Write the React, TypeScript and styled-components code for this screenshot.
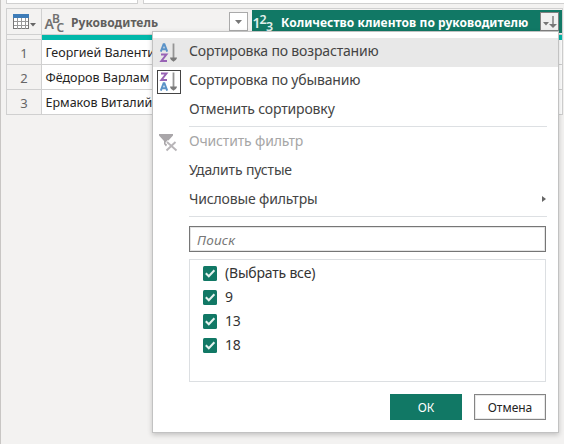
import React from "react";
import styled, { createGlobalStyle } from "styled-components";

const GlobalStyle = createGlobalStyle`
  * { box-sizing: border-box; }
  body {
    margin: 0;
    overflow: hidden;
    background: #f3f2f1;
    font-family: "Noto Sans", sans-serif;
    color: #333;
  }
`;

const Page = styled.main`
  position: relative;
  width: 564px;
  height: 444px;
  overflow: hidden;
  border-left: 1px solid #c8c6c4;
`;

const FormulaBar = styled.div`
  display: flex;
  gap: 5px;
  height: 4px;
  padding-left: 5px;
`;

const FormulaField = styled.div<{ $wide?: boolean }>`
  flex: ${(p) => (p.$wide ? "1" : "0 0 132px")};
  height: 4px;
  background: #fff;
  border: solid #d0d0d0;
  border-width: ${(p) => (p.$wide ? "0 0 1px 1px" : "0 1px 1px 1px")};
`;

const Grid = styled.section`
  width: 557px;
  margin: 4px 0 0 5px;
  border: 1px solid #d0d0d0;
`;

const HeaderRow = styled.header`
  display: grid;
  grid-template-columns: 35px 210px 1fr;
  height: 26px;
  border-bottom: 1px solid #d0d0d0;
`;

const CornerCell = styled.div`
  display: flex;
  align-items: center;
  padding-left: 6px;
  border-right: 1px solid #d0d0d0;
`;

const ColumnHeader = styled.div<{ $selected?: boolean }>`
  display: flex;
  align-items: center;
  height: ${(p) => (p.$selected ? "23px" : "25px")};
  margin-top: ${(p) => (p.$selected ? "1px" : "0")};
  padding-left: ${(p) => (p.$selected ? "1px" : "2px")};
  background: ${(p) => (p.$selected ? "#117865" : "transparent")};
  color: ${(p) => (p.$selected ? "#fff" : "#605e5c")};
`;

const ColumnTitle = styled.span<{ $track: number; $gap: number }>`
  flex: 1;
  margin-left: ${(p) => p.$gap}px;
  padding-top: 2px;
  font-size: 12px;
  line-height: 20px;
  font-weight: 700;
  letter-spacing: ${(p) => p.$track}px;
  white-space: nowrap;
`;

const FilterButton = styled.button<{ $active?: boolean }>`
  display: flex;
  align-items: center;
  justify-content: center;
  width: 19px;
  height: 19px;
  flex: none;
  padding: 0;
  margin-right: ${(p) => (p.$active ? "3px" : "4px")};
  border: 1px solid ${(p) => (p.$active ? "#808080" : "#aaa")};
  background: ${(p) => (p.$active ? "#f0f0f0" : "#fff")};
`;

const QualityRow = styled.div`
  display: grid;
  grid-template-columns: 35px 1fr;
  height: 5px;
`;

const QualityBlank = styled.div`
  border-right: 1px solid #d0d0d0;
  border-bottom: 1px solid #d0d0d0;
`;

const QualityBar = styled.div`
  background: #01b8aa;
`;

const DataRow = styled.div`
  display: grid;
  grid-template-columns: 35px 1fr;
  height: 25px;
  border-bottom: 1px solid #d0d0d0;
  &:last-child { height: 24px; border-bottom: 0; }
`;

const RowNumber = styled.div`
  border-right: 1px solid #d0d0d0;
  text-align: center;
  font-size: 13px;
  line-height: 26px;
  height: 24px;
  color: #666;
`;

const NameCell = styled.div`
  height: 24px;
  padding-left: 3.5px;
  background: #fff;
  font-size: 12.5px;
  line-height: 25px;
  white-space: nowrap;
  color: #252423;
`;

const Menu = styled.div`
  position: absolute;
  top: 31px;
  left: 151px;
  width: 407px;
  height: 402px;
  padding-top: 6px;
  border: 1px solid #c2c2c2;
  background: #fff;
  box-shadow: 0 2px 5px rgba(0, 0, 0, 0.2);
`;

const MenuItem = styled.div<{ $hover?: boolean; $disabled?: boolean }>`
  display: flex;
  align-items: center;
  height: 29px;
  padding-right: 12px;
  background: ${(p) => (p.$hover ? "#e8e8e8" : "transparent")};
  color: ${(p) => (p.$disabled ? "#a6a6a6" : "#444")};
  font-size: 14px;
  letter-spacing: -0.16px;
  white-space: nowrap;
`;

const IconSlot = styled.span<{ $boxed?: boolean }>`
  display: flex;
  align-items: center;
  justify-content: center;
  width: 24px;
  height: 24px;
  margin: 0 8px 0 4px;
  flex: none;
  border: 1px solid ${(p) => (p.$boxed ? "#444" : "transparent")};
  background: ${(p) => (p.$boxed ? "#fff" : "transparent")};
`;

const ItemLabel = styled.span<{ $lift?: number }>`
  flex: 1;
  padding-bottom: ${(p) => p.$lift ?? 3}px;
  line-height: 20px;
`;

const SubmenuArrow = styled.span`
  padding-bottom: 2px;
`;

const Separator = styled.div<{ $top: number }>`
  height: 1px;
  margin: ${(p) => p.$top}px 11px 0 36px;
  background: #dde0e3;
`;

const SearchInput = styled.input`
  display: block;
  width: 357px;
  height: 26px;
  margin: 9px 0 0 36px;
  padding: 1px 7px 0;
  border: 1px solid #767676;
  border-radius: 0;
  background: #fff;
  box-shadow: inset 0 0 0 1px #e4e4e4;
  font: italic 13.5px "Noto Sans", sans-serif;
  letter-spacing: 0.2px;
  &::placeholder { color: #777; opacity: 1; }
`;

const ValueList = styled.div`
  width: 357px;
  height: 123px;
  margin: 7px 0 0 36px;
  padding: 1px 0 0 13px;
  border: 1px solid #dcdfe2;
`;

const ValueRow = styled.label`
  display: flex;
  align-items: center;
  gap: 8px;
  height: 24px;
  font-size: 14px;
  line-height: 20px;
  letter-spacing: -0.2px;
  color: #333;
`;

const Actions = styled.footer`
  display: flex;
  justify-content: flex-end;
  gap: 12px;
  margin: 12px 12px 0 0;
`;

const ActionButton = styled.button<{ $primary?: boolean }>`
  width: 72px;
  height: 26px;
  padding: 2px 0 0;
  border: 1px solid ${(p) => (p.$primary ? "#117865" : "#858585")};
  background: ${(p) => (p.$primary ? "#117865" : "#fff")};
  box-shadow: ${(p) => (p.$primary ? "none" : "inset 0 0 0 1px #e8e8e8")};
  color: ${(p) => (p.$primary ? "#fff" : "#252423")};
  font: 12px/22px "Noto Sans", sans-serif;
`;

const Glyph = styled.svg`
  display: block;
  flex: none;
  overflow: visible;
  font-family: "Noto Sans", sans-serif;
`;

const TableIcon = () => (
  <Glyph width="24" height="16" viewBox="0 0 24 16">
    <rect x="0.5" y="0.5" width="15" height="14" fill="#fff" stroke="#777" />
    <rect x="0" y="0" width="16" height="4" fill="#3e7cb8" />
    <path d="M4.5 4v11M8.5 4v11M12.5 4v11M1 7.5h14M1 11.5h14" stroke="#999" fill="none" />
    <path d="M17 9h6l-3 3.5z" fill="#666" />
  </Glyph>
);

const TextTypeIcon = () => (
  <Glyph width="20" height="20" viewBox="0 0 20 20" fill="#707070" fontWeight="600">
    <text x="0.5" y="16.5" fontSize="14">A</text>
    <text x="8" y="10.5" fontSize="12">B</text>
    <text x="12.5" y="19.5" fontSize="12">C</text>
  </Glyph>
);

const NumberTypeIcon = () => (
  <Glyph width="21" height="20" viewBox="0 0 21 20" fill="#e0f0ec" fontWeight="600">
    <text x="-0.5" y="16" fontSize="14">1</text>
    <text x="6.5" y="11.5" fontSize="12.5">2</text>
    <text x="13" y="18.5" fontSize="12.5">3</text>
  </Glyph>
);

const letters: Record<string, { color: string; d: string }> = {
  A: { color: "#5b93c8", d: "M0.8 8L3.6 0.6h0.8L7.2 8M2 5.6h4" },
  Z: { color: "#9863b5", d: "M1 0.9h5.4L1.4 7.4h5.6" },
};

const SortIcon = ({ first, second }: { first: string; second: string }) => (
  <Glyph width="18" height="20" viewBox="0 0 18 20" fill="none" strokeWidth="2">
    <path d={letters[first].d} stroke={letters[first].color} transform="translate(0 0.6)" />
    <path d={letters[second].d} stroke={letters[second].color} transform="translate(0 10.6)" />
    <path d="M13.5 0.5v16" stroke="#959595" strokeWidth="1.8" />
    <path d="M10 14.5h7c0 2-2 3-3.5 4.2C12 17.5 10 16.5 10 14.5z" fill="#7a7a7a" />
  </Glyph>
);

const ClearFilterIcon = () => (
  <Glyph width="20" height="20" viewBox="0 0 20 20">
    <path d="M0 2h14v1.5L9 9v2l-2 3.500L5 12V9L0 3.500z" fill="#a9a6a9" />
    <path d="M7.500 9.500l10 9M17 9.500l-9.500 9" stroke="#fff" strokeWidth="4" />
    <path d="M8 10l9.500 8.500M16.500 10l-9 8.500" stroke="#b8b5b8" strokeWidth="1.900" />
  </Glyph>
);

const CheckIcon = () => (
  <Glyph width="14" height="15" viewBox="0 0 14 15">
    <rect width="14" height="15" rx="1.5" fill="#117865" />
    <path d="M2.8 7.2l3 3 5.600-6" fill="none" stroke="#e5f2ef" strokeWidth="2" />
  </Glyph>
);

const names = ["Георгией Валентин", "Фёдоров Варлам", "Ермаков Виталий"];
const values = ["(Выбрать все)", "9", "13", "18"];

export default function App() {
  return (
    <>
      <GlobalStyle />
      <Page>
        <FormulaBar>
          <FormulaField />
          <FormulaField $wide />
        </FormulaBar>
        <Grid>
          <HeaderRow>
            <CornerCell><TableIcon /></CornerCell>
            <ColumnHeader>
              <TextTypeIcon />
              <ColumnTitle $track={0.03} $gap={7}>Руководитель</ColumnTitle>
              <FilterButton>
                <Glyph width="7" height="4" viewBox="0 0 7 4"><path d="M0 0h7L3.5 4z" fill="#777" /></Glyph>
              </FilterButton>
            </ColumnHeader>
            <ColumnHeader $selected>
              <NumberTypeIcon />
              <ColumnTitle $track={0.06} $gap={7}>Количество клиентов по руководителю</ColumnTitle>
              <FilterButton $active>
                <Glyph width="15" height="14" viewBox="0 0 15 14">
                  <path d="M1 7h6L4 10.5zM7 9h8l-4 4z" fill="#777" />
                  <path d="M11 1v10" stroke="#777" strokeWidth="1.4" />
                </Glyph>
              </FilterButton>
            </ColumnHeader>
          </HeaderRow>
          <QualityRow><QualityBlank /><QualityBar /></QualityRow>
          {names.map((name, i) => (
            <DataRow key={name}>
              <RowNumber>{i + 1}</RowNumber>
              <NameCell>{name}</NameCell>
            </DataRow>
          ))}
        </Grid>
        <Menu>
          <MenuItem $hover>
            <IconSlot><SortIcon first="A" second="Z" /></IconSlot>
            <ItemLabel>Сортировка по возрастанию</ItemLabel>
          </MenuItem>
          <MenuItem>
            <IconSlot $boxed><SortIcon first="Z" second="A" /></IconSlot>
            <ItemLabel>Сортировка по убыванию</ItemLabel>
          </MenuItem>
          <MenuItem>
            <IconSlot />
            <ItemLabel>Отменить сортировку</ItemLabel>
          </MenuItem>
          <Separator $top={1} />
          <MenuItem $disabled>
            <IconSlot><ClearFilterIcon /></IconSlot>
            <ItemLabel $lift={1}>Очистить фильтр</ItemLabel>
          </MenuItem>
          <MenuItem>
            <IconSlot />
            <ItemLabel $lift={1}>Удалить пустые</ItemLabel>
          </MenuItem>
          <MenuItem>
            <IconSlot />
            <ItemLabel $lift={1}>Числовые фильтры</ItemLabel>
            <SubmenuArrow>
              <Glyph width="4" height="6" viewBox="0 0 4 6"><path d="M0 0v6l4-3z" fill="#666" /></Glyph>
            </SubmenuArrow>
          </MenuItem>
          <Separator $top={2} />
          <SearchInput placeholder="Поиск" />
          <ValueList>
            {values.map((v) => (
              <ValueRow key={v}><CheckIcon /><span>{v}</span></ValueRow>
            ))}
          </ValueList>
          <Actions>
            <ActionButton $primary>ОК</ActionButton>
            <ActionButton>Отмена</ActionButton>
          </Actions>
        </Menu>
      </Page>
    </>
  );
}
